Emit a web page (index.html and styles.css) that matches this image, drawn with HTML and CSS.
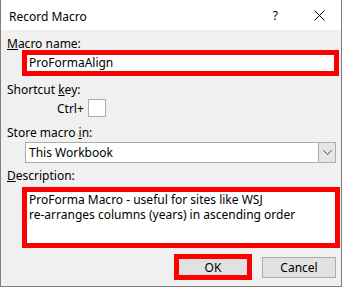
FILE: index.html
```html
<!DOCTYPE html>
<html lang="en">
<head>
  <meta charset="UTF-8" />
  <title>Record Macro</title>
  <link rel="stylesheet" href="styles.css">
</head>
<body>

  <div class="dialog">
    <div class="titlebar">
      <span class="title">Record Macro</span>
      <span class="help">?</span>
      <svg class="close" width="11" height="11" viewBox="0 0 11 11">
        <path d="M0.5 0.5 L10.5 10.5 M10.5 0.5 L0.5 10.5" stroke="#000" stroke-width="1" fill="none" />
      </svg>
    </div>

    <div class="content">
      <div class="label"><u>M</u>acro name:</div>
      <div class="mark name-box">
        <div class="field">ProFormaAlign</div>
      </div>

      <div class="label gap-key">Shortcut <u>k</u>ey:</div>
      <div class="shortcut">
        <span>Ctrl+</span>
        <div class="key-box"></div>
      </div>

      <div class="label gap-store">Store macro <u>i</u>n:</div>
      <div class="select">
        <span class="select-text">This Workbook</span>
        <span class="select-btn">
          <svg width="9" height="5" viewBox="0 0 9 5">
            <path d="M0.5 0.5 L4.5 4.5 L8.5 0.5" stroke="#444" stroke-width="1" fill="none" />
          </svg>
        </span>
      </div>

      <div class="label gap-desc"><u>D</u>escription:</div>
      <div class="mark desc-box">
        <div class="desc">ProForma Macro - useful for sites like WSJ<br>re-arranges columns (years) in ascending order</div>
      </div>

      <div class="buttons">
        <div class="mark ok-box">
          <div class="btn ok">OK</div>
        </div>
        <div class="btn cancel">Cancel</div>
      </div>
    </div>
  </div>

</body>
</html>
```

FILE: styles.css
```css
* {
  box-sizing: border-box;
  margin: 0;
  padding: 0;
}

body {
  font-family: 'Segoe UI', 'Noto Sans', sans-serif;
  font-size: 12px;
  color: #000;
  background: #fff;
  width: 344px;
  height: 288px;
}

.dialog {
  width: 342px;
  height: 287px;
  background: #f0f0f0;
  border: 1px solid #7f7f7f;
  border-top: none;
  display: flex;
  flex-direction: column;
}

.titlebar {
  height: 30px;
  background: #fff;
  display: flex;
  align-items: center;
  padding-left: 8px;
}

.title {
  flex: 1;
  padding-top: 2px;
}

.help {
  margin-right: 36px;
}

.close {
  margin-right: 16px;
}

.content {
  padding-left: 6px;
  display: flex;
  flex-direction: column;
}

.label {
  line-height: 12px;
  height: 12px;
  margin-top: 8px;
}

.label u {
  text-underline-offset: 1px;
}

.gap-key {
  margin-top: 8px;
}

.gap-store {
  margin-top: 10px;
}

.gap-desc {
  margin-top: 7px;
}

.mark {
  border: 5px solid #ff0000;
  background: #fff;
}

.name-box {
  margin: 0 2px 0 15px;
  height: 26px;
}

.field {
  line-height: 16px;
  padding-left: 2px;
}

.shortcut {
  display: flex;
  align-items: center;
  gap: 4px;
  margin: 3px 0 0 50px;
}

.key-box {
  width: 18px;
  height: 18px;
  background: #fff;
  border: 1px solid #adadad;
}

.select {
  display: flex;
  align-items: stretch;
  height: 21px;
  margin: 3px 5px 0 18px;
  background: #fff;
  border: 1px solid #acacac;
}

.select-text {
  flex: 1;
  line-height: 19px;
  padding-left: 3px;
}

.select-btn {
  width: 17px;
  background: #e5e5e5;
  border-left: 1px solid #acacac;
  display: flex;
  align-items: center;
  justify-content: center;
}

.desc-box {
  margin: 5px 1px 0 15px;
  height: 61px;
}

.desc {
  line-height: 15px;
  padding-left: 2px;
}

.buttons {
  display: flex;
  align-items: center;
  justify-content: flex-end;
  gap: 10px;
  margin: 6px 5px 0 0;
}

.ok-box {
  width: 78px;
  height: 26px;
}

.btn {
  background: #e1e1e1;
  display: flex;
  align-items: center;
  justify-content: center;
}

.ok {
  height: 100%;
}

.cancel {
  width: 74px;
  height: 21px;
  border: 1px solid #adadad;
}
```
